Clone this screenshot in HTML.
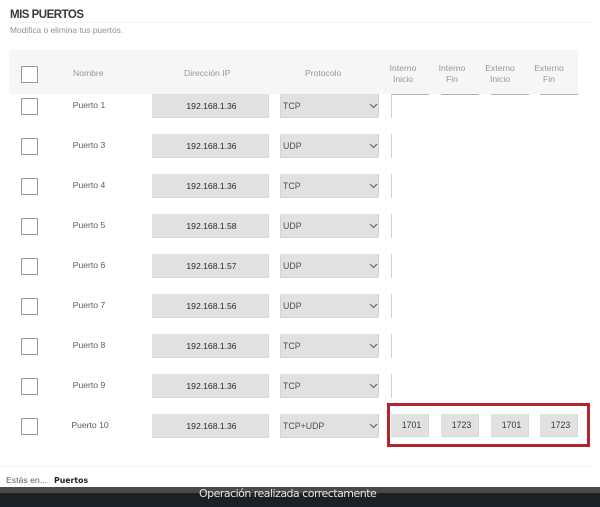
<!DOCTYPE html>
<html lang="es">
<head>
<meta charset="utf-8">
<style>
html,body{margin:0;padding:0;background:#fff}
body{width:600px;height:507px;position:relative;overflow:hidden;font-family:"Liberation Sans",sans-serif}
div{position:absolute;box-sizing:border-box}
.t{white-space:nowrap}
.cb{left:21px;width:17px;height:17px;border:1px solid #989898;background:#fff;border-radius:1px}
.n{width:100px;text-align:center;font-size:8.6px;color:#5c5c5c;line-height:12px;left:39px}
.ip{left:152px;width:117px;height:24px;background:#e1e1e1;border-bottom:1px solid #d6d6d6;border-right:1px solid #d8d8d8;padding-left:3px;text-align:center;font-size:8.6px;color:#2a2a2a;line-height:24px}
.sel{left:280px;width:99px;height:24px;background:#e1e1e1;border-right:1px solid #d4d4d4;border-bottom:1px solid #d6d6d6;border-left:1px solid #d6d6d6;font-size:8.8px;color:#505050;line-height:24px;padding-left:2px}
.sel svg{position:absolute;left:88px;top:9px}
.h{font-size:8.6px;color:#979797;text-align:center;line-height:10.5px}
.bar{height:1px;background:#b4b4b4;top:94px}
.vb{left:391px;width:1px;height:24px;background:#d0d0d0}
.pb{top:414px;height:23px;background:#e1e1e1;border-right:1px solid #d6d6d6;border-bottom:1px solid #d6d6d6;padding-left:4px;font-size:8.8px;color:#3a3a3a;text-align:center;line-height:22px}
</style>
</head>
<body>
<div class="t" style="left:10px;top:8px;font-size:11.5px;font-weight:bold;color:#383838;line-height:14px;letter-spacing:-.5px">MIS PUERTOS</div>
<div style="left:10px;top:22px;width:580px;height:1px;background:#f3f3f3"></div>
<div class="t" style="left:10px;top:25px;font-size:8.4px;color:#919191;line-height:11px">Modifica o elimina tus puertos.</div>

<div style="left:9px;top:50px;width:569px;height:44px;background:#f5f6f8"></div>
<div class="cb" style="top:66px"></div>
<div class="h t" style="left:73px;top:68px">Nombre</div>
<div class="h t" style="left:184px;top:68px">Dirección IP</div>
<div class="h t" style="left:305px;top:68px">Protocolo</div>
<div class="h" style="left:383px;top:63px;width:40px">Interno<br>Inicio</div>
<div class="h" style="left:432px;top:63px;width:40px">Interno<br>Fin</div>
<div class="h" style="left:480px;top:63px;width:40px">Externo<br>Inicio</div>
<div class="h" style="left:529px;top:63px;width:40px">Externo<br>Fin</div>
<div class="bar" style="left:391px;width:38px"></div>
<div class="bar" style="left:441px;width:38px"></div>
<div class="bar" style="left:491px;width:38px"></div>
<div class="bar" style="left:540px;width:38px"></div>

<div class="cb" style="top:98px"></div><div class="n" style="top:99px">Puerto 1</div><div class="ip" style="top:94px">192.168.1.36</div><div class="sel" style="top:94px">TCP<svg width="9" height="6" viewBox="0 0 9 6"><path d="M1 1l3.5 3.5L8 1" fill="none" stroke="#666" stroke-width="1.2"/></svg></div><div class="vb" style="top:94px"></div>
<div class="cb" style="top:138px"></div><div class="n" style="top:139px">Puerto 3</div><div class="ip" style="top:134px">192.168.1.36</div><div class="sel" style="top:134px">UDP<svg width="9" height="6" viewBox="0 0 9 6"><path d="M1 1l3.5 3.5L8 1" fill="none" stroke="#666" stroke-width="1.2"/></svg></div><div class="vb" style="top:134px"></div>
<div class="cb" style="top:178px"></div><div class="n" style="top:179px">Puerto 4</div><div class="ip" style="top:174px">192.168.1.36</div><div class="sel" style="top:174px">TCP<svg width="9" height="6" viewBox="0 0 9 6"><path d="M1 1l3.5 3.5L8 1" fill="none" stroke="#666" stroke-width="1.2"/></svg></div><div class="vb" style="top:174px"></div>
<div class="cb" style="top:218px"></div><div class="n" style="top:219px">Puerto 5</div><div class="ip" style="top:214px">192.168.1.58</div><div class="sel" style="top:214px">UDP<svg width="9" height="6" viewBox="0 0 9 6"><path d="M1 1l3.5 3.5L8 1" fill="none" stroke="#666" stroke-width="1.2"/></svg></div><div class="vb" style="top:214px"></div>
<div class="cb" style="top:258px"></div><div class="n" style="top:259px">Puerto 6</div><div class="ip" style="top:254px">192.168.1.57</div><div class="sel" style="top:254px">UDP<svg width="9" height="6" viewBox="0 0 9 6"><path d="M1 1l3.5 3.5L8 1" fill="none" stroke="#666" stroke-width="1.2"/></svg></div><div class="vb" style="top:254px"></div>
<div class="cb" style="top:298px"></div><div class="n" style="top:299px">Puerto 7</div><div class="ip" style="top:294px">192.168.1.56</div><div class="sel" style="top:294px">UDP<svg width="9" height="6" viewBox="0 0 9 6"><path d="M1 1l3.5 3.5L8 1" fill="none" stroke="#666" stroke-width="1.2"/></svg></div><div class="vb" style="top:294px"></div>
<div class="cb" style="top:338px"></div><div class="n" style="top:339px">Puerto 8</div><div class="ip" style="top:334px">192.168.1.36</div><div class="sel" style="top:334px">TCP<svg width="9" height="6" viewBox="0 0 9 6"><path d="M1 1l3.5 3.5L8 1" fill="none" stroke="#666" stroke-width="1.2"/></svg></div><div class="vb" style="top:334px"></div>
<div class="cb" style="top:378px"></div><div class="n" style="top:379px">Puerto 9</div><div class="ip" style="top:374px">192.168.1.36</div><div class="sel" style="top:374px">TCP<svg width="9" height="6" viewBox="0 0 9 6"><path d="M1 1l3.5 3.5L8 1" fill="none" stroke="#666" stroke-width="1.2"/></svg></div><div class="vb" style="top:374px"></div>
<div class="cb" style="top:418px"></div><div class="n" style="top:419px;left:40px">Puerto 10</div><div class="ip" style="top:414px">192.168.1.36</div><div class="sel" style="top:414px">TCP+UDP<svg width="9" height="6" viewBox="0 0 9 6"><path d="M1 1l3.5 3.5L8 1" fill="none" stroke="#666" stroke-width="1.2"/></svg></div>

<div style="left:387px;top:403px;width:203px;height:44px;border:3px solid #b5232f"></div>
<div class="pb" style="left:391px;width:38px">1701</div>
<div class="pb" style="left:441px;width:38px">1723</div>
<div class="pb" style="left:491px;width:38px">1701</div>
<div class="pb" style="left:540px;width:38px">1723</div>

<div style="left:0;top:466px;width:592px;height:1px;background:#f3f3f3"></div>
<div class="t" style="left:6px;top:475px;font-size:8.5px;color:#5c5c5c;line-height:10px;letter-spacing:.1px">Estás en...</div>
<div class="t" style="left:54px;top:475px;font-size:7.8px;font-weight:bold;color:#222;line-height:11px;font-family:'DejaVu Sans',sans-serif">Puertos</div>

<div style="left:0;top:487px;width:600px;height:20px;background:#1b2227"></div>
<div style="left:0;top:487px;width:600px;height:6px;background:#4a4a4a"></div>
<div class="t" style="left:199px;top:487px;font-size:11px;color:#e4e6e6;line-height:14px;font-family:'DejaVu Sans',sans-serif;letter-spacing:-.52px">Operación realizada correctamente</div>
</body>
</html>
